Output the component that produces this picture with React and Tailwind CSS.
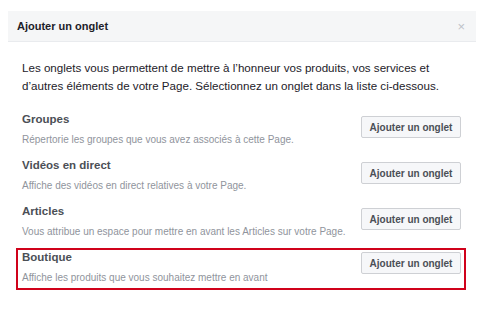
const rows = [
  { title: "Groupes", desc: "Répertorie les groupes que vous avez associés à cette Page." },
  { title: "Vidéos en direct", desc: "Affiche des vidéos en direct relatives à votre Page." },
  { title: "Articles", desc: "Vous attribue un espace pour mettre en avant les Articles sur votre Page." },
];

function AddButton({ className }) {
  return (
    <button
      className={
        "w-[100px] h-[22px] shrink-0 bg-[#f6f7f9] border border-[#ced0d4] rounded-[2px] text-[10px] font-bold text-[#4b4f56] " +
        className
      }
    >
      Ajouter un onglet
    </button>
  );
}

function Row({ title, desc }) {
  return (
    <div className="flex justify-between items-start h-[46px]">
      <div className="whitespace-nowrap">
        <div className="text-[11.5px] font-bold leading-[16px] text-[#4b4f56]">{title}</div>
        <div className="text-[10px] leading-[15px] mt-[5px] text-[#90949c]">{desc}</div>
      </div>
      <AddButton className="mt-[5px]" />
    </div>
  );
}

export default function App() {
  return (
    <div className="w-[492px] h-[318px] bg-white pt-[11px] px-[8px] font-['Liberation_Sans',Arial,sans-serif]">
      <div className="w-[468px] h-[31px] bg-[#f5f6f7] border-b border-[#e9ebee] flex items-center justify-between pl-[9px] pr-[11px]">
        <span className="text-[11px] font-bold text-[#1d2129]">Ajouter un onglet</span>
        <span className="text-[13px] text-[#bec2c9] leading-none">×</span>
      </div>
      <div className="pl-[14px] pr-[23px]">
        <p className="mt-[17px] text-[11.6px] leading-[18px] text-[#1d2129] whitespace-nowrap">
          Les onglets vous permettent de mettre à l’honneur vos produits, vos services et
          <br />
          d’autres éléments de votre Page. Sélectionnez un onglet dans la liste ci-dessous.
        </p>
        <div className="mt-[16px]">
          {rows.map((r) => (
            <Row key={r.title} {...r} />
          ))}
          <div className="-ml-[6px] -mr-[5px] -mt-[1px] pl-[4px] pr-[3px] pb-[3px] border-2 border-[#d0021b]">
            <div className="flex justify-between items-start">
              <div className="whitespace-nowrap">
                <div className="text-[11.5px] font-bold leading-[14px] text-[#4b4f56]">Boutique</div>
                <div className="text-[10px] leading-[15px] mt-[6px] text-[#90949c]">
                  Affiche les produits que vous souhaitez mettre en avant
                </div>
              </div>
              <AddButton className="mt-[2px]" />
            </div>
          </div>
        </div>
      </div>
    </div>
  );
}
